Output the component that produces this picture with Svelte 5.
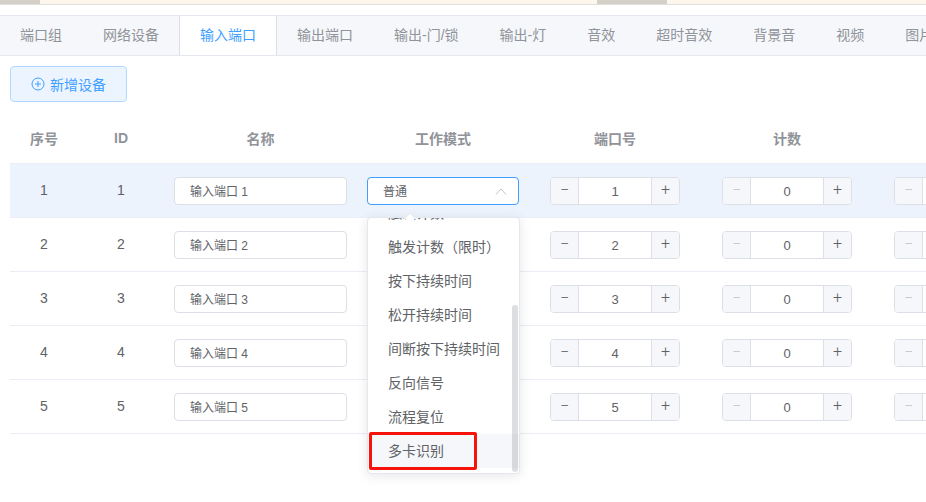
<script>
	const tabs = ['端口组', '网络设备', '输入端口', '输出端口', '输出-门/锁', '输出-灯', '音效', '超时音效', '背景音', '视频', '图片'];
	const rows = [1, 2, 3, 4, 5];
	const modes = ['触发计数', '触发计数（限时）', '按下持续时间', '松开持续时间', '间断按下持续时间', '反向信号', '流程复位', '多卡识别'];
</script>

<div class="topbar">
	<span class="seg seg-left"></span>
	<span class="seg seg-mid"></span>
</div>

<div class="tabs">
	{#each tabs as tab}
		<div class="tab" class:active={tab === '输入端口'}>{tab}</div>
	{/each}
</div>

<div class="toolbar">
	<button class="btn-add">
		<svg width="14" height="14" viewBox="0 0 14 14" fill="none" stroke="currentColor" stroke-width="1">
			<circle cx="7" cy="7" r="6" />
			<path d="M7 4v6M4 7h6" />
		</svg>
		<span>新增设备</span>
	</button>
</div>

<table>
	<colgroup>
		<col style="width: 68px" />
		<col style="width: 86px" />
		<col style="width: 193px" />
		<col style="width: 172px" />
		<col style="width: 172px" />
		<col style="width: 172px" />
		<col style="width: 172px" />
	</colgroup>
	<thead>
		<tr>
			<th>序号</th>
			<th>ID</th>
			<th>名称</th>
			<th>工作模式</th>
			<th>端口号</th>
			<th>计数</th>
			<th></th>
		</tr>
	</thead>
	<tbody>
		{#each rows as n}
			<tr class:current={n === 1}>
				<td class="num">{n}</td>
				<td class="num">{n}</td>
				<td><input class="field" readonly value="输入端口 {n}" /></td>
				<td>
					{#if n === 1}
						<div class="select">
							<input class="field focus" readonly value="普通" />
							<svg class="caret" width="12" height="7" viewBox="0 0 12 7" fill="none" stroke="#c0c4cc" stroke-width="1">
								<path d="M1 6.5 6 1l5 5.5" />
							</svg>
							<div class="dropdown">
								<span class="arrow"></span>
								<ul>
									{#each modes as mode}
										<li class:hover={mode === '多卡识别'}>{mode}</li>
									{/each}
								</ul>
								<span class="thumb"></span>
								<span class="mark"></span>
							</div>
						</div>
					{:else}
						<input class="field" readonly value="普通" />
					{/if}
				</td>
				<td>
					<div class="stepper">
						<span class="step">−</span>
						<input readonly value={n} />
						<span class="step">+</span>
					</div>
				</td>
				<td>
					<div class="stepper">
						<span class="step off">−</span>
						<input readonly value="0" />
						<span class="step">+</span>
					</div>
				</td>
				<td>
					<div class="stepper">
						<span class="step off">−</span>
						<input readonly value="0" />
						<span class="step">+</span>
					</div>
				</td>
			</tr>
		{/each}
	</tbody>
</table>

<style>
	:global(body) {
		width: 926px;
		height: 502px;
		overflow: hidden;
		background: #fff;
		font-family: 'Liberation Sans', 'Noto Sans CJK SC', sans-serif;
		font-size: 14px;
		color: #606266;
	}

	.topbar {
		position: relative;
		height: 4px;
		background: #fdf6ec;
		border-bottom: 1px solid #e3dfda;
		margin-bottom: 10px;
	}

	.seg {
		position: absolute;
		top: 0;
		height: 4px;
		background: #d5d0c8;
	}

	.seg-left {
		left: 0;
		width: 40px;
	}

	.seg-mid {
		left: 597px;
		width: 70px;
	}

	.tabs {
		display: flex;
		height: 39px;
		background: #f5f7fa;
		border-top: 1px solid #e4e7ed;
		border-bottom: 1px solid #e4e7ed;
		overflow: hidden;
	}

	.tab {
		flex: none;
		margin-left: -1px;
		padding: 0 20px;
		border-left: 1px solid transparent;
		border-right: 1px solid transparent;
		line-height: 39px;
		color: #909399;
	}

	.tab.active {
		background: #fff;
		color: #409eff;
		border-color: #dcdfe6;
	}

	.toolbar {
		padding: 10px 10px 0;
	}

	.btn-add {
		display: flex;
		align-items: center;
		gap: 5px;
		height: 36px;
		padding: 0 20px;
		background: #ecf5ff;
		border: 1px solid #b3d8ff;
		border-radius: 4px;
		color: #409eff;
		font: inherit;
	}

	table {
		width: 1035px;
		margin: 13px 0 0 10px;
		table-layout: fixed;
		border-collapse: separate;
		border-spacing: 0;
	}

	th {
		height: 46px;
		padding: 0 0 2px;
		border-bottom: 1px solid #ebeef5;
		color: #909399;
		font-weight: 700;
		text-align: center;
	}

	td {
		height: 53px;
		padding: 0 10px;
		border-bottom: 1px solid #ebeef5;
		text-align: center;
		vertical-align: middle;
	}

	td.num {
		height: 51px;
		padding-bottom: 2px;
	}

	tr.current td {
		background: #ecf3fd;
	}

	input {
		font: inherit;
		color: #606266;
		outline: none;
	}

	.field {
		display: block;
		box-sizing: border-box;
		width: 100%;
		height: 28px;
		padding: 0 15px;
		background: #fff;
		border: 1px solid #dcdfe6;
		border-radius: 4px;
		font-size: 12px;
	}

	.field.focus {
		border-color: #409eff;
	}

	.select {
		position: relative;
		text-align: left;
	}

	.caret {
		position: absolute;
		top: 11px;
		right: 12px;
	}

	.dropdown {
		position: absolute;
		top: 40px;
		left: 0;
		z-index: 2;
		box-sizing: border-box;
		width: 153px;
		height: 257px;
		background: #fff;
		border: 1px solid #e4e7ed;
		border-radius: 4px;
		box-shadow: 0 2px 12px rgba(0, 0, 0, 0.1);
	}

	.arrow {
		position: absolute;
		top: -4px;
		left: 38px;
		width: 7px;
		height: 7px;
		background: #fff;
		border-top: 1px solid #e4e7ed;
		border-left: 1px solid #e4e7ed;
		transform: rotate(45deg);
	}

	ul {
		display: flex;
		flex-direction: column;
		justify-content: flex-end;
		box-sizing: border-box;
		height: 100%;
		margin: 0;
		padding: 0 0 5px;
		list-style: none;
		overflow: hidden;
	}

	li {
		flex: none;
		height: 34px;
		padding: 0 20px;
		line-height: 34px;
		white-space: nowrap;
	}

	li.hover {
		background: #f5f7fa;
	}

	.thumb {
		position: absolute;
		top: 87px;
		right: 1px;
		width: 6px;
		height: 167px;
		background: rgba(144, 147, 153, 0.3);
		border-radius: 3px;
	}

	.mark {
		position: absolute;
		bottom: 3px;
		left: 1px;
		box-sizing: border-box;
		width: 108px;
		height: 38px;
		border: 3px solid #f5130c;
		border-radius: 2px;
	}

	.stepper {
		display: flex;
		box-sizing: border-box;
		width: 130px;
		height: 28px;
		margin-left: 11px;
		background: #fff;
		border: 1px solid #dcdfe6;
		border-radius: 4px;
		overflow: hidden;
	}

	.stepper input {
		flex: 1;
		min-width: 0;
		padding: 1px 0 0;
		border: 0;
		font-size: 13px;
		text-align: center;
		background: #fff;
	}

	.step {
		flex: none;
		width: 27px;
		background: #f5f7fa;
		color: #606266;
		font-family: Roboto, 'Liberation Sans', sans-serif;
		font-size: 16px;
		font-weight: 300;
		line-height: 24px;
		text-align: center;
	}

	.step:first-child {
		border-right: 1px solid #dcdfe6;
	}

	.step:last-child {
		border-left: 1px solid #dcdfe6;
	}

	.step.off {
		color: #c0c4cc;
	}
</style>
